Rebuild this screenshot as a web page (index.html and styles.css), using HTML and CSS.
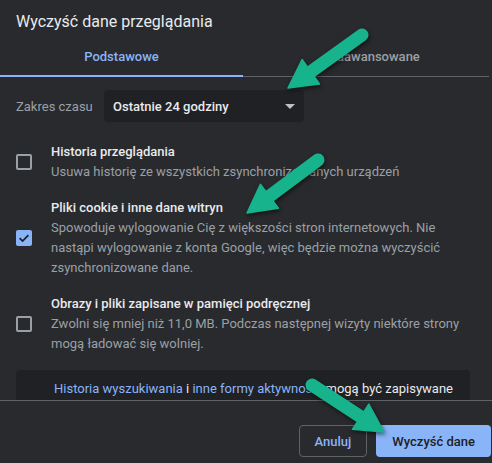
FILE: index.html
```html
<!DOCTYPE html>
<html lang="pl">
<head>
<meta charset="utf-8">
<title>Wyczyść dane przeglądania</title>
<link rel="stylesheet" href="styles.css">
</head>
<body>
<div class="dialog">
  <div class="title">Wyczyść dane przeglądania</div>
  <div class="tabs">
    <div class="tab active">Podstawowe</div>
    <div class="tab second">Zaawansowane</div>
  </div>
  <div class="content">
    <div class="range">
      <span class="range-label">Zakres czasu</span>
      <div class="select">
        <span>Ostatnie 24 godziny</span>
        <span class="caret"></span>
      </div>
    </div>
    <div class="options">
      <div class="option">
        <span class="cb"></span>
        <div class="text">
          <div class="opt-title">Historia przeglądania</div>
          <div class="opt-desc">Usuwa historię ze wszystkich zsynchronizowanych urządzeń</div>
        </div>
      </div>
      <div class="option">
        <span class="cb checked">
          <svg viewBox="0 0 16 16" width="16" height="16"><path d="M3.6 8.2 L6.6 11.1 L12.4 5.2" fill="none" stroke="#202124" stroke-width="1.8"/></svg>
        </span>
        <div class="text">
          <div class="opt-title">Pliki cookie i inne dane witryn</div>
          <div class="opt-desc">Spowoduje wylogowanie Cię z większości stron internetowych. Nie nastąpi wylogowanie z konta Google, więc będzie można wyczyścić zsynchronizowane dane.</div>
        </div>
      </div>
      <div class="option">
        <span class="cb"></span>
        <div class="text">
          <div class="opt-title">Obrazy i pliki zapisane w pamięci podręcznej</div>
          <div class="opt-desc">Zwolni się mniej niż 11,0 MB. Podczas następnej wizyty niektóre strony mogą ładować się wolniej.</div>
        </div>
      </div>
    </div>
    <div class="info">
      <a class="link">Historia wyszukiwania</a> i <a class="link">inne formy aktywności</a> mogą być zapisywane
    </div>
  </div>
  <div class="footer">
    <button class="btn btn-outline">Anuluj</button>
    <button class="btn btn-primary">Wyczyść dane</button>
  </div>
</div>
<svg class="arrows" width="492" height="463" viewBox="0 0 492 463">
  <g class="arrow">
    <line x1="362" y1="35" x2="310.8" y2="71.7"/>
    <polygon points="302.1,59.5 288,88 319.5,83.9"/>
  </g>
  <g class="arrow">
    <line x1="318" y1="160" x2="269.4" y2="196.3"/>
    <polygon points="260.4,184.3 247,213 278.4,208.3"/>
  </g>
  <g class="arrow">
    <line x1="312" y1="385" x2="360.6" y2="416.7"/>
    <polygon points="368.8,404.1 384,432 352.4,429.3"/>
  </g>
</svg>
</body>
</html>
```
FILE: styles.css
```css
html, body {
  margin: 0;
  padding: 0;
}
body {
  width: 492px;
  height: 463px;
  overflow: hidden;
  position: relative;
  background: #292a2d;
  font-family: Roboto, "Liberation Sans", sans-serif;
  font-size: 13px;
  color: #e8eaed;
}
.dialog {
  width: 492px;
  height: 463px;
  display: flex;
  flex-direction: column;
}
.title {
  padding: 12px 16px 0;
  font-size: 16px;
  line-height: 20px;
  color: #e8eaed;
  margin-bottom: 4px;
}
.tabs {
  display: flex;
  width: 489px;
  border-bottom: 1px solid #5f6368;
}
.tab {
  width: 243px;
  height: 40px;
  display: flex;
  align-items: center;
  justify-content: center;
  font-weight: 500;
  color: #9aa0a6;
  position: relative;
}
.tab.second {
  padding-left: 20px;
  box-sizing: border-box;
}
.tab.active {
  color: #8ab4f8;
}
.tab.active::after {
  content: "";
  position: absolute;
  left: 0;
  right: 0;
  bottom: -1px;
  height: 2px;
  background: #8ab4f8;
}
.content {
  height: 323px;
  overflow: hidden;
  padding: 13px 22px 0 16px;
  box-sizing: border-box;
}
.range {
  display: flex;
  align-items: center;
  height: 32px;
}
.range-label {
  width: 88px;
  color: #9aa0a6;
}
.select {
  width: 200px;
  height: 32px;
  box-sizing: border-box;
  background: #202124;
  border-radius: 4px;
  padding: 0 9px 0 9px;
  display: flex;
  align-items: center;
  justify-content: space-between;
  font-weight: 500;
}
.caret {
  width: 0;
  height: 0;
  border-left: 5px solid transparent;
  border-right: 5px solid transparent;
  border-top: 5px solid #bdc1c6;
}
.options {
  margin-top: 12px;
}
.option {
  display: flex;
  align-items: center;
  padding: 8px 0;
}
.cb {
  flex: none;
  width: 16px;
  height: 16px;
  box-sizing: border-box;
  border: 2px solid #9aa0a6;
  border-radius: 2px;
  margin-right: 19px;
  position: relative;
}
.cb.checked {
  border: none;
  background: #8ab4f8;
}
.cb svg {
  display: block;
}
.text {
  flex: 1;
  line-height: 20px;
}
.opt-title {
  font-weight: 500;
  color: #e8eaed;
}
.opt-desc {
  color: #9aa0a6;
}
.info {
  margin-top: 8px;
  height: 44px;
  box-sizing: border-box;
  background: #202124;
  border-radius: 4px;
  padding: 9px 0 0 38px;
  line-height: 20px;
  color: #e8eaed;
}
.link {
  color: #8ab4f8;
}
.footer {
  border-top: 1px solid #5f6368;
  flex: 1;
  display: flex;
  justify-content: flex-end;
  align-items: flex-start;
  padding: 24px 1px 0 0;
  gap: 9px;
}
.btn {
  height: 32px;
  border-radius: 4px;
  font-family: inherit;
  font-size: 13px;
  font-weight: 500;
  padding: 0 16px;
  cursor: pointer;
}
.btn-outline {
  background: transparent;
  border: 1px solid #5f6368;
  color: #8ab4f8;
  padding: 0 15px;
}
.btn-primary {
  background: #8ab4f8;
  border: none;
  color: #202124;
}
.arrows {
  position: absolute;
  left: 0;
  top: 0;
  pointer-events: none;
  filter: drop-shadow(1px 2px 2px rgba(0, 0, 0, 0.55));
}
.arrow line {
  stroke: #17b38c;
  stroke-width: 13;
  stroke-linecap: round;
}
.arrow polygon {
  fill: #17b38c;
  stroke: #17b38c;
  stroke-width: 1.5;
  stroke-linejoin: round;
}
```
